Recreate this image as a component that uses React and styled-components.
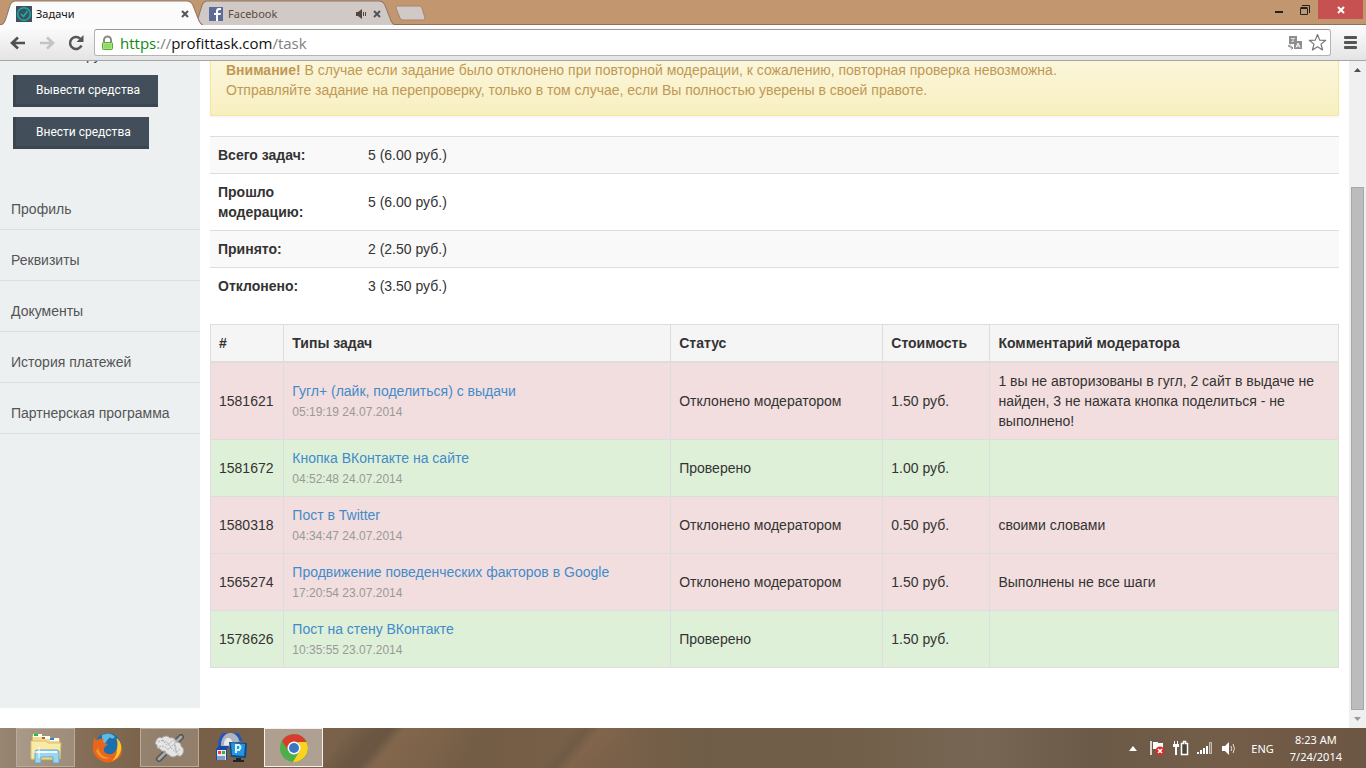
import styled, { createGlobalStyle } from "styled-components";

const ui = `"Noto Sans", "Open Sans", sans-serif`;

const GlobalStyle = createGlobalStyle`
  * {
    box-sizing: border-box;
  }

  body {
    margin: 0;
    color: #333;
    background: #fff;
    font: 14px/20px "Liberation Sans", Arial, sans-serif;
  }

  button {
    margin: 0;
    padding: 0;
    border: none;
    background: none;
    font: inherit;
  }

  svg {
    display: block;
  }
`;

const Desktop = styled.div`
  display: flex;
  flex-direction: column;
  height: 100vh;
  overflow: hidden;
`;

/* browser chrome */

const TabStrip = styled.header`
  display: flex;
  flex: none;
  height: 25px;
  background: #c29770;
  border-bottom: 1px solid #8f7157;
`;

const TabList = styled.nav`
  display: flex;
  flex: 1;
  padding-left: 1px;
`;

const Tab = styled.div`
  display: grid;
  grid-template-columns: 16px 1fr auto auto;
  align-items: center;
  gap: 4px;
  width: 202px;
  height: 25px;
  margin-right: ${(props) => (props.$active ? "-10px" : "0px")};
  padding: 2px 12px 0px 15px;
  position: relative;
  z-index: ${(props) => (props.$active ? 2 : 1)};
  color: ${(props) => (props.$active ? "#111" : "#5a4a42")};
  font: 11px/16px ${ui};
`;

const TabShape = styled.svg`
  position: absolute;
  inset: 0;
  width: 100%;
  height: 100%;
  z-index: -1;
`;

const TabButton = styled.button`
  display: flex;
  width: 12px;
  height: 16px;
  align-items: center;
  justify-content: center;
`;

const NewTab = styled.button`
  width: 32px;
  height: 16px;
  margin: 5px 0px 0px -1px;
`;

const WindowButtons = styled.div`
  display: flex;
  align-items: flex-start;
`;

const WindowButton = styled.button`
  display: flex;
  align-items: center;
  justify-content: center;
  width: ${(props) => (props.$danger ? "45px" : "26px")};
  height: 19px;
  margin-right: ${(props) => (props.$danger ? "3px" : "0px")};
  background: ${(props) => (props.$danger ? "#c75050" : "transparent")};
`;

const Toolbar = styled.div`
  display: flex;
  flex: none;
  align-items: center;
  height: 36px;
  padding: 0px 9px 0px 10px;
  background: linear-gradient(#fdfdfd, #e4e4e4);
  border-bottom: 1px solid #a5a5a5;
`;

const ToolButton = styled.button`
  display: flex;
  align-items: center;
  width: ${(props) => props.$width || "29px"};
  height: 24px;
`;

const MenuButton = styled.button`
  margin-left: 13px;
`;

const Omnibox = styled.div`
  display: flex;
  align-items: center;
  flex: 1;
  height: 27px;
  padding: 0px 3px 0px 6px;
  gap: 6px;
  background: #fff;
  border: 1px solid #b4b4b4;
  border-top-color: #999;
  border-radius: 3px;
`;

const Url = styled.a`
  flex: 1;
  color: #808080;
  font: 15px/22px "Open Sans", "Noto Sans", sans-serif;
  text-decoration: none;

  b {
    color: #111;
    font-weight: 400;
  }

  em {
    color: #0f8a0f;
    font-style: normal;
  }
`;

/* page */

const Viewport = styled.div`
  display: flex;
  flex: 1;
  min-height: 0;
`;

const Clip = styled.div`
  flex: 1;
  overflow: hidden;
`;

const Page = styled.div`
  display: flex;
  margin-top: -17px;
`;

const Sidebar = styled.aside`
  flex: none;
  width: 200px;
  height: 664px;
  padding-top: 1px;
  background: #ecf0f1;
`;

const Balance = styled.p`
  margin: 0px 0px 10px;
  padding-left: 16px;
  color: #34495e;
`;

const Actions = styled.div`
  display: flex;
  flex-direction: column;
  align-items: flex-start;
  gap: 10px;
  padding-left: 13px;
`;

const ActionButton = styled.button`
  height: 32px;
  padding: 0px 18px 0px 20px;
  color: #fff;
  background: #424f5a;
  border-left: 3px solid #3b4650;
  border-bottom: 3px solid #3b4650;
  font: 12px/28px Roboto, sans-serif;
`;

const Menu = styled.nav`
  display: flex;
  flex-direction: column;
  padding-top: 30px;
`;

const MenuLink = styled.a`
  padding: 20px 11px 10px;
  color: #555;
  border-bottom: 1px solid #dadfe1;
  text-decoration: none;
`;

const Main = styled.main`
  flex: 1;
  padding: 0px 10px;
`;

const Alert = styled.div`
  margin-bottom: 20px;
  padding: 15px;
  color: #c09853;
  background: linear-gradient(#fcf8e3, #f8efc0);
  border: 1px solid #f5e79e;
  box-shadow: 0px 1px 2px rgba(0, 0, 0, 0.05);
`;

const Summary = styled.table`
  width: 100%;
  margin-bottom: 20px;
  border-spacing: 0;

  th,
  td {
    padding: 8px;
    border-top: 1px solid #ddd;
    text-align: left;
  }

  th {
    width: 150px;
  }

  tr:nth-child(odd) {
    background: #f9f9f9;
  }
`;

const Tasks = styled.table`
  width: 100%;
  table-layout: fixed;
  border-collapse: collapse;

  th,
  td {
    padding: 8px;
    border: 1px solid #ddd;
    text-align: left;
  }

  thead th {
    background: #f5f5f5;
    border-bottom-width: 2px;
  }
`;

const Col = styled.col`
  width: ${(props) => props.$width};
`;

const TaskRow = styled.tr`
  background: ${(props) => (props.$accepted ? "#dff0d8" : "#f2dede")};
`;

const TaskLink = styled.a`
  display: block;
  color: #428bca;
  text-decoration: none;
`;

const TaskTime = styled.time`
  color: #999;
  font-size: 12px;
  line-height: 1;
`;

const Scrollbar = styled.div`
  display: flex;
  flex: none;
  flex-direction: column;
  align-items: center;
  width: 17px;
  padding: 6px 0px;
  background: #f0f0f0;
`;

const Thumb = styled.div`
  flex: 523;
  width: 13px;
  margin-bottom: 5px;
  background: #bcbcbc;
  border: 1px solid #a8a8a8;
`;

const Track = styled.div`
  flex: 114;
`;

/* taskbar */

const Taskbar = styled.footer`
  display: flex;
  flex: none;
  height: 40px;
  padding-right: 24px;
  color: #fff;
  background:
    linear-gradient(
      130deg,
      transparent 25%,
      rgba(92, 76, 60, 0.5) 27%,
      rgba(92, 76, 60, 0.5) 28%,
      rgba(138, 108, 80, 0.6) 29%,
      transparent 35%,
      transparent 41%,
      rgba(100, 84, 64, 0.4) 42%,
      rgba(138, 106, 78, 0.5) 43%,
      transparent 46%
    ),
    linear-gradient(
      90deg,
      #978673,
      #8a745d 4%,
      #775f47 12%,
      #79614a 25%,
      #745d45 35%,
      #7a6049 45%,
      #6f5d47 52%,
      #715f49 62%,
      #776654 72%,
      #6b5a47 80%,
      #735d48 90%,
      #6c5644
    );
  font: 11px/17px ${ui};
`;

const AppList = styled.nav`
  display: flex;
  flex: 1;
  gap: 3px;
  padding-left: 16px;
`;

const AppButton = styled.button`
  display: flex;
  align-items: center;
  justify-content: center;
  width: 59px;
  height: 39px;
  background: ${(props) =>
    props.$active ? "rgba(255,255,255,.4)" : props.$open ? "rgba(255,255,255,.2)" : "transparent"};
  border: 1px solid
    ${(props) => (props.$active ? "#f5f0ea" : props.$open ? "#b9aa9a" : "transparent")};
`;

const Tray = styled.div`
  display: flex;
  align-items: center;
  gap: 8px;
`;

const TrayButton = styled.button`
  display: flex;
  justify-content: center;
  width: 16px;
`;

const Language = styled.button`
  margin-left: 6px;
  color: #fff;
`;

const Clock = styled.time`
  margin-left: 8px;
  text-align: center;
`;

const CloseIcon = ({ color = "#555", size = 8 }) => (
  <svg width={size} height={size} viewBox="0 0 8 8">
    <path d="M1 1l6 6M7 1L1 7" stroke={color} strokeWidth="2" />
  </svg>
);

const TabSoundIcon = () => (
  <svg width="12" height="12" viewBox="0 0 12 12" fill="#514740">
    <path d="M1 4h2l4-3v10L3 8H1z" />
    <path d="M8.500 4v4M10.500 4v4" stroke="#514740" />
  </svg>
);

const VolumeIcon = () => (
  <svg width="16" height="15" viewBox="0 0 16 15" fill="#fff">
    <path d="M1 5h3l4-4v13l-4-4H1z" />
    <path d="M10 5q1.500 2.500 0 5M12 3q3 4.500 0 9" fill="none" stroke="#e6dfd8" />
  </svg>
);

const TaskFavicon = () => (
  <svg width="16" height="16">
    <path fill="#43505c" d="M0 0h16v16H0z" />
    <circle cx="8" cy="8" r="6.3" fill="none" stroke="#08b5ad" strokeWidth="1.4" />
    <path d="M5 8l2.5 2.5L11.5 5" fill="none" stroke="#08b5ad" strokeWidth="1.5" />
  </svg>
);

const FacebookFavicon = () => (
  <svg width="16" height="14">
    <path fill="#5c6b9c" d="M1 0h14v14H1z" />
    <path fill="#fff" d="M8 14V8H6V6h2V4q0-3 3-3h2v2h-1.500Q10 3 10 4.500V6h3l-.5 2H10v6z" />
  </svg>
);

const ArrowIcon = ({ color = "#505050", flip }) => (
  <svg width="16" height="14" viewBox="0 0 16 14" fill="none" stroke={color} strokeWidth="2.6">
    <path d={flip ? "M1 7h13M8 1.5L14 7l-6 5.5" : "M15 7H2M8 1.5L2 7l6 5.5"} />
  </svg>
);

const ReloadIcon = () => (
  <svg width="16" height="16" viewBox="0 0 16 16">
    <path d="M13.500 10.500A6 6 0 1 1 12 3.500" fill="none" stroke="#555" strokeWidth="2.5" />
    <path d="M15.500 0v7H8.500z" fill="#555" />
  </svg>
);

const LockIcon = () => (
  <svg width="13" height="16" viewBox="0 0 13 16">
    <path d="M3 8V5a3.500 3.500 0 0 1 7 0v3" fill="none" stroke="#8a8a8a" strokeWidth="2" />
    <rect x="1.500" y="7.500" width="10" height="7" rx="1" fill="#a5e37c" stroke="#58a83a" />
    <path d="M3 10h7M3 12h7" stroke="#83cd5d" />
  </svg>
);

const TranslateIcon = () => (
  <svg width="14" height="14" viewBox="0 0 14 14">
    <path d="M1 0h8v5H6v3H1z" fill="#8e8e8e" />
    <path d="M3 2.500h4M5 2.500v3M3.500 5.500h2" stroke="#ddd" />
    <path d="M6 5h8v8H6z" fill="#8e8e8e" />
    <path d="M8 11.500L10 7l2 4.500M8.500 10h3" stroke="#fff" fill="none" />
    <path d="M0 10h3v2h2M2 8.500L.5 10 2 11.500M3.500 10.500L5 12l-1.500 1.500" stroke="#888" fill="none" />
  </svg>
);

const StarIcon = () => (
  <svg width="19" height="19" viewBox="0 0 19 19">
    <path
      d="M9.500 1.500l2.200 5.600 6 .2-4.700 3.800 1.600 5.900-5.100-3.300L4.400 17 6 11.100 1.300 7.300l6-.2z"
      fill="#fff"
      stroke="#777"
      strokeWidth="1.2"
      strokeLinejoin="round"
    />
  </svg>
);

const FolderIcon = () => (
  <svg width="33" height="32" viewBox="0 0 33 32">
    <path d="M3 3h8l2 2h9l1 2h8v21H3z" fill="#f1dc8c" stroke="#b99c48" />
    <path d="M4 2h9v3H4z" fill="#fff" />
    <path d="M5 2h4v2H5z" fill="#19c52c" />
    <path d="M13 4h8v3h-8z" fill="#fff" />
    <path d="M13 5h3v2h-3z" fill="#d85427" />
    <path d="M21 6h9v3h-9z" fill="#fff" />
    <path d="M21 6h4v2h-4z" fill="#2283d4" />
    <path d="M2 9h15l2 2h13l-1 16H2z" fill="#fae9a7" stroke="#d9bf6b" />
    <path d="M6 31V20q0-2 2-2h20q2 0 2 2v11h-6v-6H12v6z" fill="#9ed5ec" stroke="#5fa9ca" />
    <path d="M8 20h20" stroke="#e7faff" strokeWidth="2" />
    <path d="M10 15v11M5 20h11" stroke="#fff" />
  </svg>
);

const FirefoxIcon = () => (
  <svg width="31" height="31" viewBox="0 0 31 31">
    <circle cx="16" cy="14" r="13" fill="#1a6fae" />
    <path d="M10 3q8-4 13 2-3 3-4 1t-5 4-4-2z" fill="#63b8dd" />
    <path
      d="M2 5q1 3 3 3 3-2 7-1-2 2 0 4l4 1-4 4q-1 5 4 6 6 1 8-4 4-7-1-12 6 3 7 9 1 9-6 13-8 5-16 0-8-5-7-14 0-5 1-9z"
      fill="#e8661b"
    />
    <path d="M25 6q5 5 4 12-2 8-9 11 5-5 5-11 1-7 0-12z" fill="#f9cb37" />
    <path d="M6 16q2 9 12 10-10 3-14-7z" fill="#f5942b" />
  </svg>
);

const ToolIcon = () => (
  <svg width="31" height="28" viewBox="0 0 31 28">
    <path d="M5 25L27 3" stroke="#555" strokeWidth="6" strokeLinecap="round" />
    <path d="M5 25L27 3" stroke="#a8a8a8" strokeWidth="3" strokeLinecap="round" />
    <path
      d="M2 7q2-5 6-3 4-4 8 0 5-1 6 4 5 0 5 4 4 3 2 7-2 5-6 2-4 4-8 0-3-1-4-4-3 1-5-2-4-1-3-4-3-1-1-4z"
      fill="#e5e5e5"
      stroke="#aaa"
    />
    <path
      d="M4 8q5-3 7 1t6-1 4 4 5 3M5 13q5-2 7 1t6-2 4 5M8 6q5 1 8 6t9 8"
      fill="none"
      stroke="#aaa"
      strokeDasharray="2 1"
    />
  </svg>
);

const NetworkIcon = () => (
  <svg width="33" height="30" viewBox="0 0 33 30">
    <path d="M5 15a10 12 0 0 1 21-7" fill="#aeb5bf" stroke="#2455bd" strokeWidth="3" />
    <path d="M12 4q6 0 7 9H8q0-6 4-9z" fill="#e9e9e9" stroke="#aaa" />
    <path d="M1 16l3-3h10l-2 3v11H1z" fill="#1848a8" />
    <path d="M2 17h9v10H2z" fill="#e3e9f5" />
    <path d="M3 18h3v3H3z" fill="#e8462d" />
    <path d="M7 18h3v3H7z" fill="#3aae3e" />
    <path d="M3 23v4M5 23v4M7 23v4M9 23v4" stroke="#274d9b" />
    <path d="M14 9l18 1-1 15-15-1z" fill="#0b4c8f" />
    <path d="M16 10l14 1-1 12-12-1z" fill="#2696df" />
    <path d="M21 20v-8h3q3 2 0 5h-3" stroke="#d9f5ff" strokeWidth="2" fill="none" />
    <path d="M21 25h5v2h3v2H18v-2h3z" fill="#202429" />
  </svg>
);

const ChromeIcon = () => (
  <svg width="28" height="28" viewBox="0 0 28 28">
    <circle cx="14" cy="14" r="14" fill="#4daf49" />
    <path d="M2 7A14 14 0 0 1 26.500 8H14a6.500 6.500 0 0 0-6 8z" fill="#db3b2f" />
    <path d="M26.500 8A14 14 0 0 1 13 28l6.500-11Q21 12 18 8z" fill="#fbd21f" />
    <circle cx="14" cy="14" r="6.500" fill="#fff" />
    <circle cx="14" cy="14" r="5" fill="#3a76c4" />
  </svg>
);

const FlagIcon = () => (
  <svg width="16" height="16" viewBox="0 0 16 16">
    <path d="M2 15V1" stroke="#fff" strokeWidth="1.5" />
    <path d="M4 2h5v1h5v8H9V9H4z" fill="#fff" />
    <circle cx="11" cy="11" r="4.500" fill="#d72c2c" />
    <path d="M9 9l4 4M13 9l-4 4" stroke="#fff" strokeWidth="1.5" />
  </svg>
);

const PowerIcon = () => (
  <svg width="16" height="16" viewBox="0 0 16 16">
    <path d="M1.500 1v4M4.500 1v4" stroke="#fff" />
    <path d="M0 4h6v3H4v8H2V7H0z" fill="#fff" />
    <path d="M8.500 3.500h2v-2h2v2h2v11h-6z" fill="#4e4439" stroke="#fff" strokeWidth="1.5" />
  </svg>
);

const SignalIcon = () => (
  <svg width="16" height="14" viewBox="0 0 16 14">
    <path d="M1 13v-2M4 13V9M7 13V7M10 13V5" stroke="#fff" strokeWidth="2" />
    <path d="M12.500 12.500v-11h2v11z" fill="#8b7d70" stroke="#c9c0b8" />
  </svg>
);

const tabs = [
  { title: "Задачи", icon: <TaskFavicon />, active: true },
  { title: "Facebook", icon: <FacebookFavicon />, audible: true },
];

const menu = ["Профиль", "Реквизиты", "Документы", "История платежей", "Партнерская программа"];

const summary = [
  ["Всего задач:", "5 (6.00 руб.)"],
  ["Прошло модерацию:", "5 (6.00 руб.)"],
  ["Принято:", "2 (2.50 руб.)"],
  ["Отклонено:", "3 (3.50 руб.)"],
];

const tasks = [
  {
    id: 1581621,
    title: "Гугл+ (лайк, поделиться) с выдачи",
    time: "05:19:19 24.07.2014",
    price: "1.50 руб.",
    comment:
      "1 вы не авторизованы в гугл, 2 сайт в выдаче не найден, 3 не нажата кнопка поделиться - не выполнено!",
  },
  {
    id: 1581672,
    title: "Кнопка ВКонтакте на сайте",
    time: "04:52:48 24.07.2014",
    price: "1.00 руб.",
    accepted: true,
  },
  {
    id: 1580318,
    title: "Пост в Twitter",
    time: "04:34:47 24.07.2014",
    price: "0.50 руб.",
    comment: "своими словами",
  },
  {
    id: 1565274,
    title: "Продвижение поведенческих факторов в Google",
    time: "17:20:54 23.07.2014",
    price: "1.50 руб.",
    comment: "Выполнены не все шаги",
  },
  {
    id: 1578626,
    title: "Пост на стену ВКонтакте",
    time: "10:35:55 23.07.2014",
    price: "1.50 руб.",
    accepted: true,
  },
];

const apps = [
  { name: "Explorer", icon: <FolderIcon />, open: true },
  { name: "Firefox", icon: <FirefoxIcon /> },
  { name: "Tools", icon: <ToolIcon />, open: true },
  { name: "Network", icon: <NetworkIcon /> },
  { name: "Chrome", icon: <ChromeIcon />, active: true },
];

const BrowserTabs = () => (
  <TabStrip>
    <TabList>
      {tabs.map((tab) => (
        <Tab key={tab.title} $active={tab.active}>
          <TabShape viewBox="0 0 200 25" preserveAspectRatio="none">
            <path
              d="M0 25Q3 24 5 18L9 5Q11 1 14 1H184Q188 1 190 5L195 18Q197 24 200 25"
              fill={tab.active ? "#fbfbfb" : "#d0c9c5"}
              stroke="#8f7868"
            />
          </TabShape>
          {tab.icon}
          <span>{tab.title}</span>
          {tab.audible ? <TabSoundIcon /> : <span />}
          <TabButton aria-label="Close tab">
            <CloseIcon />
          </TabButton>
        </Tab>
      ))}
      <NewTab aria-label="New tab">
        <svg width="32" height="16">
          <path
            d="M3 1h22q2 0 3 2l3 10q0 2-2 2H9q-2 0-3-2L2 3q0-2 1-2z"
            fill="#d0c9c5"
            stroke="#a58670"
          />
        </svg>
      </NewTab>
    </TabList>
    <WindowButtons>
      <WindowButton aria-label="Minimize">
        <svg width="8" height="8">
          <path d="M0 5h8v2H0z" fill="#222" />
        </svg>
      </WindowButton>
      <WindowButton aria-label="Restore">
        <svg width="10" height="10" fill="none" stroke="#222">
          <path d="M2 .5h7.500V8" />
          <path d="M.5 3.500h7v6h-7zM.5 2.500h7" />
        </svg>
      </WindowButton>
      <WindowButton $danger aria-label="Close">
        <CloseIcon color="#fff" />
      </WindowButton>
    </WindowButtons>
  </TabStrip>
);

const BrowserToolbar = () => (
  <Toolbar>
    <ToolButton aria-label="Back">
      <ArrowIcon />
    </ToolButton>
    <ToolButton aria-label="Forward">
      <ArrowIcon color="#c4c4c4" flip />
    </ToolButton>
    <ToolButton $width="26px" aria-label="Reload">
      <ReloadIcon />
    </ToolButton>
    <Omnibox>
      <LockIcon />
      <Url href="#task">
        <em>https</em>://<b>profittask.com</b>/task
      </Url>
      <button aria-label="Translate">
        <TranslateIcon />
      </button>
      <button aria-label="Bookmark">
        <StarIcon />
      </button>
    </Omnibox>
    <MenuButton aria-label="Menu">
      <svg width="13" height="13" fill="#555">
        <rect width="13" height="3" rx="1" />
        <rect y="5" width="13" height="3" rx="1" />
        <rect y="10" width="13" height="3" rx="1" />
      </svg>
    </MenuButton>
  </Toolbar>
);

const TaskTable = () => (
  <Tasks>
    <colgroup>
      <Col $width="6.5%" />
      <Col $width="34.3%" />
      <Col $width="18.8%" />
      <Col $width="9.5%" />
      <Col />
    </colgroup>
    <thead>
      <tr>
        <th>#</th>
        <th>Типы задач</th>
        <th>Статус</th>
        <th>Стоимость</th>
        <th>Комментарий модератора</th>
      </tr>
    </thead>
    <tbody>
      {tasks.map((task) => (
        <TaskRow key={task.id} $accepted={task.accepted}>
          <td>{task.id}</td>
          <td>
            <TaskLink href="#task">{task.title}</TaskLink>
            <TaskTime>{task.time}</TaskTime>
          </td>
          <td>{task.accepted ? "Проверено" : "Отклонено модератором"}</td>
          <td>{task.price}</td>
          <td>{task.comment}</td>
        </TaskRow>
      ))}
    </tbody>
  </Tasks>
);

const App = () => (
  <Desktop>
    <GlobalStyle />
    <BrowserTabs />
    <BrowserToolbar />
    <Viewport>
      <Clip>
        <Page>
          <Sidebar>
            <Balance>Счет: 2.50 руб.</Balance>
            <Actions>
              <ActionButton>Вывести средства</ActionButton>
              <ActionButton>Внести средства</ActionButton>
            </Actions>
            <Menu>
              {menu.map((item) => (
                <MenuLink key={item} href="#menu">
                  {item}
                </MenuLink>
              ))}
            </Menu>
          </Sidebar>
          <Main>
            <Alert role="alert">
              <b>Внимание!</b> В случае если задание было отклонено при повторной модерации, к
              сожалению, повторная проверка невозможна.
              <br />
              Отправляйте задание на перепроверку, только в том случае, если Вы полностью уверены в
              своей правоте.
            </Alert>
            <Summary>
              <tbody>
                {summary.map(([label, value]) => (
                  <tr key={label}>
                    <th scope="row">{label}</th>
                    <td>{value}</td>
                  </tr>
                ))}
              </tbody>
            </Summary>
            <TaskTable />
          </Main>
        </Page>
      </Clip>
      <Scrollbar>
        <svg width="7" height="7">
          <path d="M0 5l3.500-4L7 5z" fill="#505050" />
        </svg>
        <Track />
        <Thumb />
        <svg width="7" height="7">
          <path d="M0 2l3.500 4L7 2z" fill="#999" />
        </svg>
      </Scrollbar>
    </Viewport>
    <Taskbar>
      <AppList>
        {apps.map((app) => (
          <AppButton key={app.name} $open={app.open} $active={app.active} aria-label={app.name}>
            {app.icon}
          </AppButton>
        ))}
      </AppList>
      <Tray>
        <TrayButton aria-label="Show hidden icons">
          <svg width="8" height="5">
            <path d="M0 5l4-5 4 5z" fill="#fff" />
          </svg>
        </TrayButton>
        <TrayButton aria-label="Action center">
          <FlagIcon />
        </TrayButton>
        <TrayButton aria-label="Power">
          <PowerIcon />
        </TrayButton>
        <TrayButton aria-label="Network">
          <SignalIcon />
        </TrayButton>
        <TrayButton aria-label="Volume">
          <VolumeIcon />
        </TrayButton>
        <Language>ENG</Language>
        <Clock>
          8:23 AM
          <br />
          7/24/2014
        </Clock>
      </Tray>
    </Taskbar>
  </Desktop>
);

export default App;
